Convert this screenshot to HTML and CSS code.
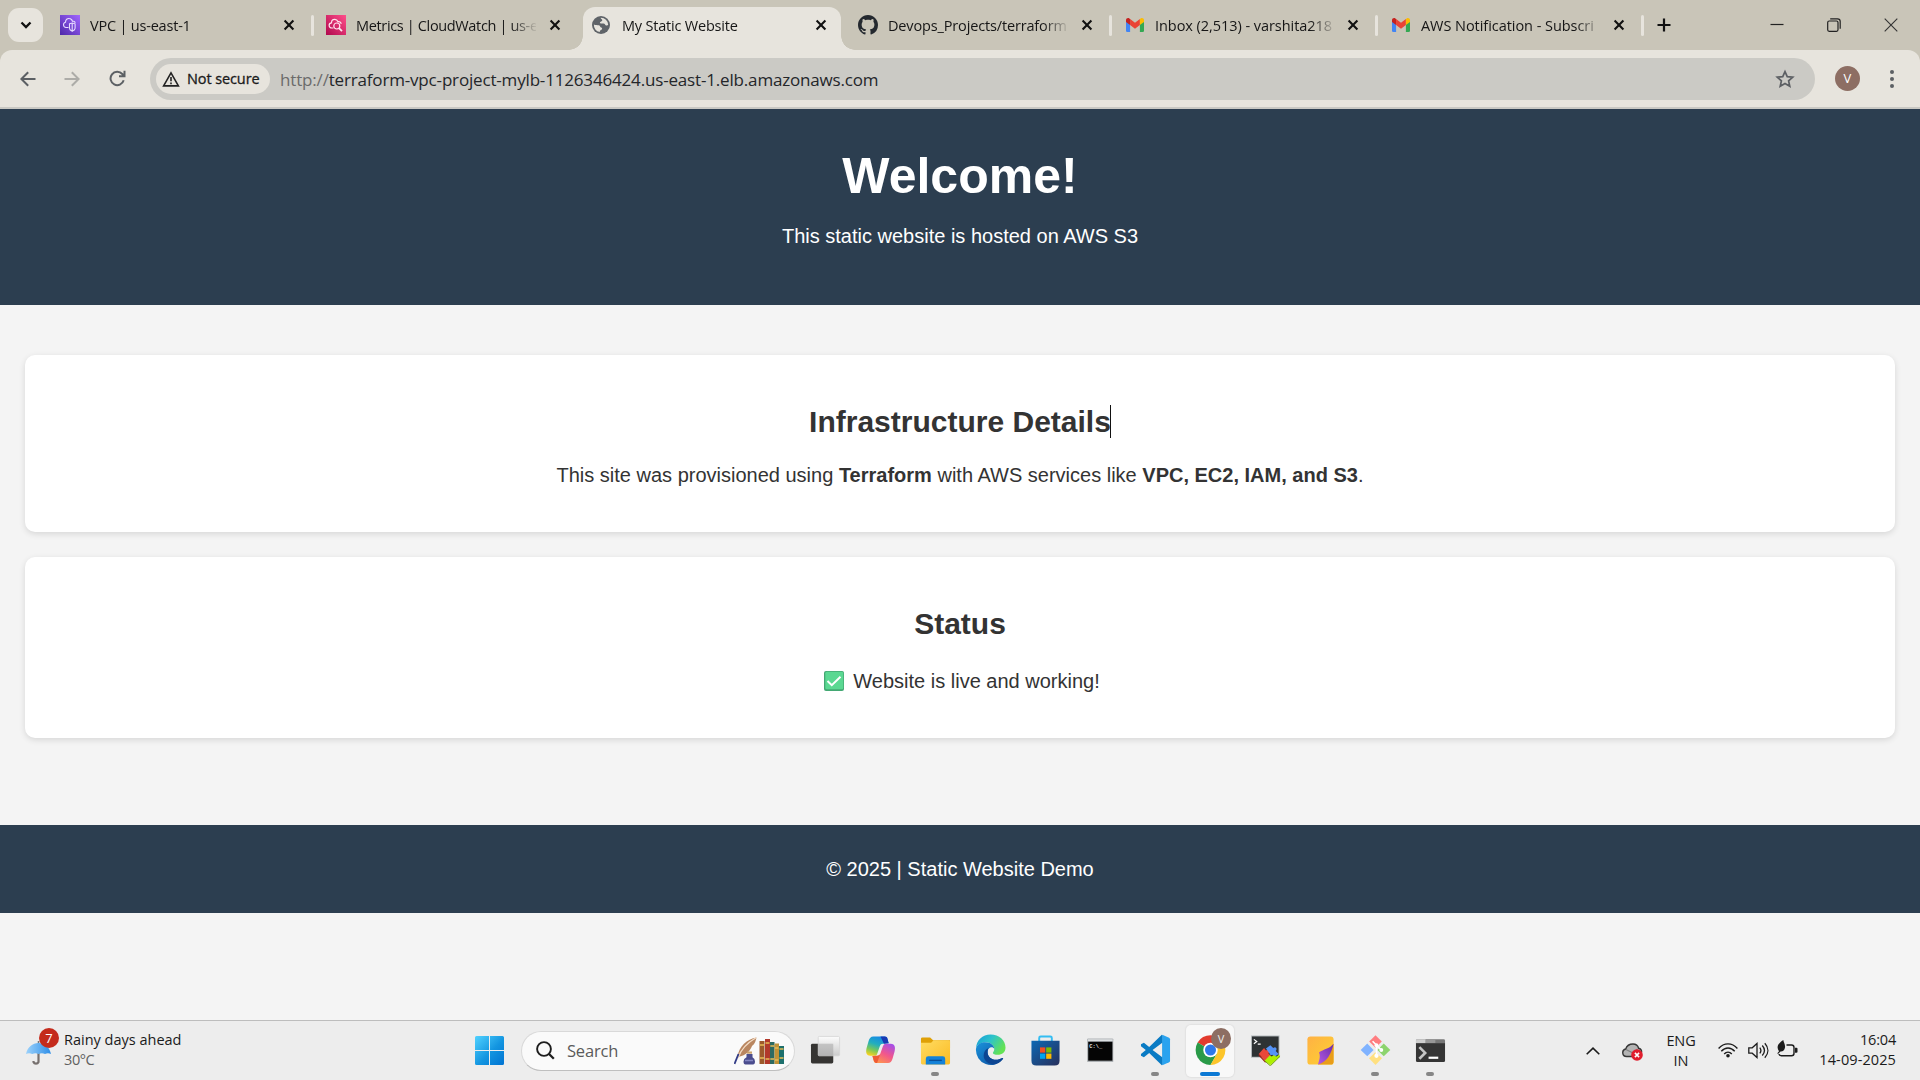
FILE: index.html
```html
<!DOCTYPE html>
<html lang="en">
<head>
<meta charset="utf-8">
<title>My Static Website</title>
<link rel="stylesheet" href="styles.css">
</head>
<body>
<svg class="defs" width="0" height="0" aria-hidden="true">
  <defs>
    <linearGradient id="gVpc" x1="0" y1="1" x2="1" y2="0"><stop offset="0" stop-color="#4d27a8"/><stop offset="1" stop-color="#a166ff"/></linearGradient>
    <linearGradient id="gCw" x1="0" y1="1" x2="1" y2="0"><stop offset="0" stop-color="#b0084d"/><stop offset="1" stop-color="#ff4f8b"/></linearGradient>
    <linearGradient id="gWin" gradientUnits="userSpaceOnUse" x1="0" y1="0" x2="29" y2="29"><stop offset="0" stop-color="#51d2ff"/><stop offset=".55" stop-color="#1395e0"/><stop offset="1" stop-color="#0073d2"/></linearGradient>
    <linearGradient id="gFolder" x1="0" y1="0" x2="1" y2="1"><stop offset="0" stop-color="#ffdc62"/><stop offset="1" stop-color="#fbbb23"/></linearGradient>
    <linearGradient id="gStore" x1="0" y1="0" x2="1" y2="1"><stop offset="0" stop-color="#0d68b4"/><stop offset="1" stop-color="#28305c"/></linearGradient>
    <linearGradient id="gEdgeTop" x1="0" y1="0" x2="1" y2=".5"><stop offset="0" stop-color="#159bd8"/><stop offset=".5" stop-color="#2dc3cb"/><stop offset="1" stop-color="#63e254"/></linearGradient>
    <linearGradient id="gEdgeLow" x1="0" y1="0" x2="1" y2="1"><stop offset="0" stop-color="#1a94dc"/><stop offset="1" stop-color="#0c4a9c"/></linearGradient>
    <linearGradient id="gCopA" x1=".6" y1="0" x2=".2" y2="1"><stop offset="0" stop-color="#1689e6"/><stop offset=".4" stop-color="#23aebe"/><stop offset=".7" stop-color="#78c85a"/><stop offset="1" stop-color="#ffd21c"/></linearGradient>
    <linearGradient id="gCopB" x1=".8" y1="0" x2=".2" y2="1"><stop offset="0" stop-color="#a54ee8"/><stop offset=".5" stop-color="#f2578b"/><stop offset="1" stop-color="#ff9a48"/></linearGradient>
    <linearGradient id="gSticky" x1="0" y1="0" x2="1" y2="1"><stop offset="0" stop-color="#ffb144"/><stop offset="1" stop-color="#fdd231"/></linearGradient>
    <linearGradient id="gCurl" x1="0" y1="1" x2="1" y2="0"><stop offset="0" stop-color="#b45ae4"/><stop offset="1" stop-color="#6a2ba8"/></linearGradient>
    <linearGradient id="gUmb" x1="0" y1="0" x2="1" y2="0"><stop offset="0" stop-color="#9cd2fb"/><stop offset="1" stop-color="#2d8ee8"/></linearGradient>
    <linearGradient id="gGlass" x1="0" y1="0" x2="0" y2="1"><stop offset="0" stop-color="#fdfdfd"/><stop offset="1" stop-color="#c9c9c9"/></linearGradient>
    <symbol id="close" viewBox="0 0 12 12"><path d="M1.6 1.6l8.8 8.8M10.4 1.6l-8.8 8.8" stroke="#111" stroke-width="2.1" fill="none"/></symbol>
    <symbol id="gmail" viewBox="0 0 18 14"><path d="M0 2v10.700Q0 14 1.300 14H4.100V6z" fill="#4285f4"/><path d="M18 2v10.700Q18 14 16.700 14H13.900V6z" fill="#34a853"/><path d="M4.100 1.100V7.100L9 10.800l4.900-3.700V1.100L9 4.800z" fill="#ea4335"/><path d="M0 2v2l4.100 3.100v-6L3.300.5C2-.5 0 .4 0 2z" fill="#c5221f"/><path d="M18 2v2l-4.100 3.100v-6l.8-.6C16-.5 18 .4 18 2z" fill="#fbbc04"/></symbol>
  </defs>
</svg>

<div class="screen">
  <div class="tabstrip">
    <button class="tab-search"><svg width="12" height="8" viewBox="0 0 12 8"><path d="M1.500 1.500L6 6l4.500-4.500" fill="none" stroke="#111" stroke-width="2.300"/></svg></button>
    <div class="tab">
      <svg class="favicon" viewBox="0 0 20 20"><path fill="url(#gVpc)" d="M0 0h20v20H0z"/><g fill="none" stroke="#e7dcff" stroke-width="1.100"><path d="M8.500 12.500H6A2.700 2.700 0 0 1 5.500 7.200C5.500 4.500 7.500 3.200 9.300 3.500c1.800.1 2.800 1.300 3.200 2.800 1.300-.3 2.500.2 2.700 1.500"/><path d="M9.500 8.800L12.200 8l2.900.8v4.500c0 1.300-1 2.200-2.900 3-1.800-.8-2.700-1.700-2.700-3zM12.200 8v8"/></g></svg>
      <span class="tab-title t-vpc">VPC | us-east-1</span><svg class="tab-close"><use href="#close"/></svg>
    </div>
    <div class="tab">
      <svg class="favicon" viewBox="0 0 20 20"><path fill="url(#gCw)" d="M0 0h20v20H0z"/><g fill="none" stroke="#ffe4ee" stroke-width="1.200"><path d="M7.500 13H6a2.600 2.600 0 0 1-.5-5.200C5.500 5.200 7 4.200 8.800 4.300c1.700.1 2.600 1 3.200 2.400 1.400-.3 3 .4 3.200 2.200"/><circle cx="10.800" cy="11" r="3"/><path d="M13 13.200l3 3" stroke-width="1.700"/></g></svg>
      <span class="tab-title t-cw">Metrics | CloudWatch | us-e</span><svg class="tab-close"><use href="#close"/></svg>
    </div>
    <div class="tab active">
      <svg class="favicon globe" viewBox="0 0 18 18"><circle cx="9" cy="9" r="9" fill="#5f6368"/><path d="M8.700 1.800c-.2 1.500 1.600 1.200 1.600 2.400 0 1.500-2.400 1-2.400 2.400 0 1.300 1.800.8 3.500.9 1.900.1 1.500 2.200 3.100 2.100.8 0 1.300-.5 1.700-.8A7.200 7.200 0 0 0 8.700 1.800zM1.900 8.500c1.400.9 3.600.5 5 .8 1.600.4 1 1.900 2.100 2.100 1.500.3 1.300 1.300.7 2-.7.900-1.900.5-2 2.700A7.200 7.200 0 0 1 1.900 8.500z" fill="#e7e4dd"/></svg>
      <span class="tab-title t-site">My Static Website</span><svg class="tab-close"><use href="#close"/></svg>
    </div>
    <div class="tab">
      <svg class="favicon" viewBox="0 0 16 16"><path fill="#24292f" d="M8 0C3.580 0 0 3.580 0 8c0 3.540 2.290 6.530 5.470 7.590.4.070.55-.17.55-.38 0-.19-.01-.82-.01-1.490-2.010.37-2.530-.49-2.690-.94-.09-.23-.48-.94-.82-1.130-.28-.15-.68-.52-.01-.53.63-.01 1.080.58 1.230.82.72 1.210 1.870.87 2.330.66.07-.52.28-.87.51-1.070-1.780-.2-3.640-.89-3.640-3.950 0-.87.31-1.590.82-2.150-.08-.2-.36-1.020.08-2.120 0 0 .67-.21 2.200.82.640-.18 1.320-.27 2-.27s1.360.09 2 .27c1.530-1.040 2.200-.82 2.200-.82.440 1.100.160 1.920.080 2.120.510.560.820 1.270.820 2.150 0 3.070-1.870 3.750-3.650 3.950.290.250.540.730.540 1.480 0 1.070-.010 1.930-.010 2.200 0 .210.150.460.550.380A8.010 8.010 0 0 0 16 8c0-4.420-3.580-8-8-8z"/></svg>
      <span class="tab-title t-gh">Devops_Projects/terraform</span><svg class="tab-close"><use href="#close"/></svg>
    </div>
    <div class="tab">
      <svg class="favicon mail"><use href="#gmail"/></svg>
      <span class="tab-title t-inbox">Inbox (2,513) - varshita218</span><svg class="tab-close"><use href="#close"/></svg>
    </div>
    <div class="tab">
      <svg class="favicon mail"><use href="#gmail"/></svg>
      <span class="tab-title t-aws">AWS Notification - Subscri</span><svg class="tab-close"><use href="#close"/></svg>
    </div>
    <svg class="new-tab" width="14" height="14" viewBox="0 0 14 14"><path d="M7 .5v13M.5 7h13" stroke="#111" stroke-width="2.200"/></svg>
    <div class="window-buttons">
      <svg width="14" height="14" viewBox="0 0 14 14"><path d="M.5 6.500h13" stroke="#222" stroke-width="1.200"/></svg>
      <svg width="14" height="14" viewBox="0 0 14 14"><g fill="none" stroke="#222" stroke-width="1.200"><rect x=".7" y="3" width="10.300" height="10.300" rx="1.500"/><path d="M3.200.8h7.300q2.700 0 2.700 2.700v7.200"/></g></svg>
      <svg width="14" height="14" viewBox="0 0 14 14"><path d="M.7.7l12.600 12.600M13.300.7L.7 13.300" stroke="#333" stroke-width="1.100"/></svg>
    </div>
  </div>

  <div class="toolbar-wrap">
  <div class="toolbar">
    <svg class="nav-icon" width="16" height="16" viewBox="0 0 16 16"><path d="M15.500 8H2M8.200 1.200L1.400 8l6.800 6.800" fill="none" stroke="#5c6064" stroke-width="2"/></svg>
    <svg class="nav-icon" width="16" height="16" viewBox="0 0 16 16"><path d="M.5 8H14M7.800 1.200L14.600 8l-6.800 6.800" fill="none" stroke="#adaca8" stroke-width="2"/></svg>
    <svg class="nav-icon reload" width="17" height="17" viewBox="0 0 17 17"><path d="M14.700 10.300A6.700 6.700 0 1 1 13.300 4l1.600 1.700M15.500 .8v5.500H10" fill="none" stroke="#5c6064" stroke-width="2"/></svg>
    <div class="omnibox">
      <div class="chip"><svg width="18" height="16" viewBox="0 0 18 16"><path d="M9 1.900L16.400 14.900H1.600z" fill="none" stroke="#222" stroke-width="1.600"/><path d="M9 6v4.300M9 11.500v1.800" stroke="#222" stroke-width="1.600"/></svg><span>Not secure</span></div>
      <div class="url"><span class="scheme">http://</span>terraform-vpc-project-mylb-1126346424.us-east-1.elb.amazonaws.com</div>
      <svg class="star" width="20" height="20" viewBox="0 0 20 20"><path d="M10 2.600l2.250 5.050 5.500.55-4.150 3.700 1.200 5.400L10 14.500l-4.800 2.800 1.200-5.400-4.150-3.700 5.500-.55z" fill="none" stroke="#5c5f63" stroke-width="1.700"/></svg>
    </div>
    <span class="avatar">V</span>
    <svg class="kebab" width="4" height="18" viewBox="0 0 4 18"><g fill="#5c6064"><circle cx="2" cy="2" r="2"/><circle cx="2" cy="9" r="2"/><circle cx="2" cy="16" r="2"/></g></svg>
  </div>
  </div>

  <main class="site">
    <header class="site-header">
      <h1>Welcome!</h1>
      <p>This static website is hosted on AWS S3</p>
    </header>
    <div class="sections">
      <section class="card">
        <h2>Infrastructure Details<i class="caret"></i></h2>
        <p>This site was provisioned using <b>Terraform</b> with AWS services like <b>VPC, EC2, IAM, and S3</b>.</p>
      </section>
      <section class="card status">
        <h2>Status</h2>
        <p><svg class="check" width="20" height="20" viewBox="0 0 20 20"><rect width="20" height="20" rx="2" fill="#43a873"/><rect x="1.300" y=".8" width="18" height="17.400" rx="1.500" fill="#5bd892"/><path d="M3.500 10l4.300 4.200 8.700-8.400" fill="none" stroke="#fff" stroke-width="2"/></svg><span>Website is live and working!</span></p>
      </section>
    </div>
    <footer class="site-footer">© 2025 | Static Website Demo</footer>
  </main>

  <div class="taskbar">
    <div class="weather">
      <div class="weather-icon">
        <svg width="25" height="25" viewBox="0 0 25 25"><path d="M12.500 10v11a2.700 2.700 0 0 1-5 0v-1" fill="none" stroke="#77716f" stroke-width="2.200"/><path d="M12.500 0v3" stroke="#777" stroke-width="1.500"/><path d="M0 13C1.500 6 6.500 2 12.500 2S23.500 6 25 13q-3-1.700-6 0-3-1.700-6.500 0-3-1.700-6.300 0Q3 11.500 0 13z" fill="url(#gUmb)"/></svg>
        <span class="badge">7</span>
      </div>
      <div class="weather-text"><span class="w1">Rainy days ahead</span><span class="w2">30°C</span></div>
    </div>
    <svg class="start" width="29" height="29" viewBox="0 0 29 29"><path fill="url(#gWin)" d="M1.500 0H14v14H0V1.500Q0 0 1.500 0zM15 0h12.500Q29 0 29 1.500V14H15zM0 15h14v14H1.500Q0 29 0 27.500zM15 15h14v12.500q0 1.500-1.500 1.500H15z"/></svg>
    <div class="search">
      <svg width="19" height="19" viewBox="0 0 19 19"><circle cx="8" cy="8" r="6.900" fill="none" stroke="#1d1d1d" stroke-width="1.900"/><path d="M12.800 12.800l5 5" stroke="#1d1d1d" stroke-width="2.300"/></svg>
      <span class="search-label">Search</span>
      <svg class="quill" width="50" height="28" viewBox="0 0 50 28">
        <path d="M22.500.5C13 2 5 9 3.500 20 13 19 17 12 18 9c3-2 4-6 4.500-8.500z" fill="#b98660"/><path d="M22 .8C13 6 7 12 4 21" fill="none" stroke="#f3dcc5" stroke-width="1.300"/><path d="M4.500 17L.5 27" stroke="#303a86" stroke-width="1.800"/>
        <path d="M13 14.500h5v2.200h-5z" fill="#c9a06c"/><path d="M12.500 17h6v3.200q2.500 1.500 2.500 4.300 0 3-2 3h-7.500q-2 0-2-3 0-2.800 3-4.300z" fill="#4b4d8e"/><path d="M11 23.500h8" stroke="#8588c4" stroke-width="1.500"/>
        <path d="M25.500 4h5v23h-5z" fill="#9d5a2c"/><path d="M31 2h5v25h-5z" fill="#b2392b"/><path d="M36 5h4.500v22H36z" fill="#2c6a62"/><path d="M40.500 6.500H45V27h-4.500z" fill="#c09236"/><path d="M45 9h5v18h-5z" fill="#1d706d"/>
        <path d="M26 8h4m-4 13h4m1.500-15h4m-4 16h4m.8-13h3.700m-3.700 13h3.700m1-11h3.500m-3.500 12h3.500m1-11h4m-4 9h4" stroke="#e7bd56" stroke-width="1.400"/>
      </svg>
    </div>
    <div class="apps">
      <div class="app"><svg viewBox="0 0 32 32"><rect x="1" y="9.500" width="23" height="20.500" rx="1.500" fill="#353432"/><rect x="8.500" y="2" width="22" height="20" rx="1" fill="url(#gGlass)" fill-opacity=".93" stroke="#d4d4d4" stroke-width=".8"/><path d="M9 9.500h15V22H9z" fill="#a6a6a6" opacity=".45"/></svg></div>
      <div class="app"><svg viewBox="0 0 32 32"><path d="M8.500 2h12c3 0 2.700 3 4 7l-6 .5c-2 0-2.800 1.400-3.300 3l-2.500 7c-.7 2-1.400 2.500-3.400 2.500H5.700C.5 22 .8 17 1.800 13.500l2-7C4.700 3.700 6 2 8.500 2z" fill="url(#gCopA)"/><path d="M16 2h4.500c3 0 2.700 3 4 7l-5 .5z" fill="#1739b3"/><path d="M23.700 29.500h-12c-3 0-2.800-3-4-7.300l5.200-.3c2 0 2.800-1.600 3.300-3.200l2.300-6.500c.7-2 1.500-2.700 3.500-2.700h4.400c5.200 0 5 5 4 8.500l-2 7c-.8 2.800-2.200 4.500-4.700 4.500z" fill="url(#gCopB)"/><path d="M7.700 22.200l5.200-.3c1.800 0 2.600-1.200 3.100-2.600L12.500 29.500c-3.300 0-3.500-3-4.800-7.300z" fill="#ef5b35"/></svg></div>
      <div class="app running"><svg viewBox="0 0 32 32"><path d="M1 4.500Q1 3 2.500 3h8l3 3H31v8H1z" fill="#dfa007"/><path d="M1 8.500h10.500L14 6h15.500Q31 6 31 7.500v22q0 1.500-1.500 1.500h-27Q1 31 1 29.500z" fill="url(#gFolder)"/><path d="M6 31v-6q0-2.500 2.500-2.500h15q2.500 0 2.500 2.500v6z" fill="#1482d8"/><path d="M9.500 26.700h13" stroke="#084f99" stroke-width="1.400"/></svg></div>
      <div class="app"><svg viewBox="0 0 32 32"><path d="M1 15C1 6 8 0 16 0c9 0 15.500 6 15.500 13.500 0 5-3.700 7.500-8 7.500-3 0-5-.9-5-2 0-.8 1.400-1.400 1.400-4C19.900 11 16 8 10.500 8 5 8 1 12 1 15z" fill="url(#gEdgeTop)"/><path d="M1 15C1.500 10.500 5.500 8 10.500 8c5.500 0 9.400 3 9.400 7-1-3-6.900-2.500-6.900 3 0 6 6 9.500 12 7.500 1.500-.4 2.600-1 3.300-1.200 1 0 .8.600.5 1.100A15.500 15.500 0 0 1 1 15z" fill="url(#gEdgeLow)"/><path d="M13 18c0 6 6 9.500 12 7.500 1.500-.4 2.600-1 3.300-1.200 1 0 .8.600.5 1.100-5 7.500-16 7-19.300-.5C8 21 9.500 15.500 14 14c-.7 1.200-1 2.500-1 4z" fill="#0c4592"/></svg></div>
      <div class="app"><svg viewBox="0 0 32 32"><path d="M9.500 7V3.500Q9.500 2 11 2h10q1.500 0 1.500 1.500V7" fill="none" stroke="#35bdf2" stroke-width="2"/><path d="M1.500 6.500h29V27q0 5-5 5h-19q-5 0-5-5z" fill="url(#gStore)"/><path d="M10.300 13.300h5.400v5.400h-5.400z" fill="#f25022"/><path d="M16.700 13.300h5.400v5.400h-5.400z" fill="#7fba00"/><path d="M10.300 19.700h5.400v5.400h-5.400z" fill="#00a4ef"/><path d="M16.700 19.700h5.400v5.400h-5.400z" fill="#ffb900"/></svg></div>
      <div class="app"><svg viewBox="0 0 32 32"><rect x="2.200" y="4" width="27" height="24.500" rx="1" fill="#aeb2b5"/><path d="M3 5h25.500v1.700H3z" fill="#dde0e2"/><path d="M3.300 7.500h25V27h-25z" fill="#050505"/><text x="4.500" y="13.500" class="tiny">C:\_</text></svg></div>
      <div class="app running"><svg viewBox="0 0 32 32"><path d="M22.500.3L9.500 13 4 8.500 1 10v2l5 4-5 4v2l3 1.500 5.500-4.500 13 12.700 1-.7V1zM23 8.500v15L13 16z" fill="#0a7bc4" fill-rule="evenodd"/><path d="M23 .3l7 3q1 .5 1 1.700v22q0 1.200-1 1.700l-7 3z" fill="#2aa3ef"/></svg></div>
      <div class="app chrome"><svg viewBox="0 0 32 32"><path d="M16 16L2.700 8.300A15.400 15.400 0 0 1 29.300 8.300z" fill="#e33b2e"/><path d="M16 16L2.700 8.300A15.400 15.400 0 0 0 16 31.400L22.700 20z" fill="#299a48"/><path d="M16 16L29.300 8.300A15.400 15.400 0 0 1 16 31.400L22.700 19.500z" fill="#fcc52b"/><circle cx="16" cy="16" r="7.500" fill="#fff"/><circle cx="16" cy="16" r="5.700" fill="#2e78ea"/></svg><span class="chrome-badge">V</span></div>
      <div class="app"><svg viewBox="0 0 32 32"><path d="M1 1h29.500v23H1z" fill="#b8bdc0"/><path d="M2 2h27.500v21H2z" fill="#2e3234"/><path d="M4 5l3 2.200L4 9.500M8 10h3" fill="none" stroke="#fff" stroke-width="1.200"/><path d="M9 20l5.500-6 2 2.500q2-1.500 3 0t-.5 3l2.500 2.500-5.500 5.500z" fill="#e8473a"/><path d="M9 20l7 7.500v2L9 22z" fill="#9c1c14"/><path d="M16.500 14.500l4.500-3.500 3 3q2-1.500 3 0t-.5 3l3 3-4 3-2.500-2q-2.500 1-2.800-1.500z" fill="#5593f7"/><path d="M15 27l5.500-5.500q1.500 2 3 .5t3.500 1l3-2 1 1.500-10 9z" fill="#aef000"/><path d="M15 27l6 5.300 10-9.800" fill="none" stroke="#6e9e00" stroke-width="1"/></svg></div>
      <div class="app"><svg viewBox="0 0 32 32"><rect x="2.500" y="2" width="27" height="29" rx="3" fill="url(#gSticky)"/><path d="M29.500 9.500L13.500 31H26.500q3 0 3-3z" fill="#e99d19"/><path d="M29.500 9.500C25 15 19 15 14.500 18.500c2 5-.5 9-1 12.500C23 28 27 20 29.500 9.500z" fill="url(#gCurl)"/></svg></div>
      <div class="app running"><svg viewBox="0 0 32 32"><path d="M16 .7l6.500 6.500L16 13.700 9.500 7.200z" fill="#ff7d80"/><path d="M24.500 9.200l6.800 6.800-6.800 6.500L18 16z" fill="#8dd46d"/><path d="M7.500 9.200L14 16l-6.500 6.500L.7 16z" fill="#80b3ff"/><path d="M16 18l6.700 6.500-6.700 7-6.700-7z" fill="#ffe080"/><path d="M13 7l9 9M17 10v12" stroke="#fff" stroke-width="1.700"/><circle cx="17" cy="11" r="2" fill="#fff"/><circle cx="22" cy="16" r="2" fill="#fff"/><circle cx="17" cy="22" r="2.200" fill="#fff"/></svg></div>
      <div class="app running"><svg viewBox="0 0 32 32"><path d="M1 6.500Q1 5 2.500 5h27Q31 5 31 6.500V10H1z" fill="#777"/><path d="M1 6.500Q1 5 2.500 5H11v4H1z" fill="#cfcfcf"/><path d="M11 5h10v4H11z" fill="#989898"/><path d="M1 9h30v18q0 1.500-1.500 1.500h-27Q1 28.500 1 27z" fill="#353535"/><path d="M4.500 13l6 6-6 6" fill="none" stroke="#c6c6c6" stroke-width="2.700"/><path d="M14 24h10" stroke="#fff" stroke-width="2.300"/></svg></div>
    </div>
    <div class="tray">
      <svg class="chevron" width="14" height="8" viewBox="0 0 14 8"><path d="M.7 7.300L7 1.200l6.300 6.100" fill="none" stroke="#1c1c1c" stroke-width="1.600"/></svg>
      <svg class="cloud" width="21" height="18" viewBox="0 0 21 18"><path d="M4.500 13.500A3.800 3.800 0 0 1 3.700 6C5 2.200 8 1 11 1c3.200 0 5 2 5.600 4.300 2 .5 3 2 3 3.500l-7 4.700z" fill="#b4b4b4" stroke="#373737" stroke-width="1.400"/><path d="M4 6.500L11 10l4.500-4" fill="none" stroke="#808080" stroke-width="1.300"/><circle cx="15" cy="12" r="5.800" fill="#e01e2d"/><path d="M12.900 9.900l4.200 4.200m0-4.200l-4.200 4.200" stroke="#fff" stroke-width="1.500"/></svg>
      <div class="lang"><span>ENG</span><span>IN</span></div>
      <svg class="wifi" width="20" height="15" viewBox="0 0 20 15"><g fill="none" stroke="#1c1c1c" stroke-width="1.400"><path d="M.6 5.500C6-.7 14-.7 19.400 5.500M3.300 8.300c4-4.500 9.400-4.500 13.400 0M6.200 11c2.300-2.500 5.300-2.500 7.600 0"/></g><circle cx="10" cy="12.800" r="1.800" fill="#1c1c1c"/></svg>
      <svg class="sound" width="21" height="17" viewBox="0 0 21 17"><g fill="none" stroke="#1c1c1c" stroke-width="1.300"><path d="M.8 5.800h3.400L9 1.500v14l-4.800-4.300H.8zM11.800 5.600c1.300 1.700 1.300 4.100 0 5.800M14.300 3.500c2.600 3 2.600 7 0 10M16.800 1.300c4.100 4.500 4.100 10 0 14.400"/></g></svg>
      <svg class="battery" width="21" height="18" viewBox="0 0 21 18"><path d="M9.500 5h5Q17 5 17 7.500v5.700q0 2.500-2.500 2.500H4.300Q2.300 15.700 2 14" fill="none" stroke="#1c1c1c" stroke-width="1.400"/><path d="M18 7.800h1.500q1 0 1 1v3q0 1-1 1H18z" fill="#1c1c1c"/><path d="M6.300 0C6.500 2 8.500 4.500 8 7.500c-.4 2.800-2.200 4.200-4.500 4L1 14l-.7-.8 1.700-2C-1 7 1 3.500 6.300 0z" fill="#1c1c1c"/></svg>
      <div class="clock"><span class="time">16:04</span><span class="date">14-09-2025</span></div>
    </div>
  </div>
</div>
</body>
</html>
```
FILE: styles.css
```css
* { box-sizing: border-box; }
body { margin: 0; overflow: hidden; background: #f4f4f4; }
.defs { display: block; position: absolute; }
.screen { width: 1920px; height: 1080px; display: flex; flex-direction: column; font-family: "Open Sans", "Noto Sans", sans-serif; color: #1b1b1b; white-space: nowrap; }
.screen svg { display: block; flex: none; }

/* browser tabs */
.tabstrip { height: 50px; flex: none; display: flex; align-items: center; background: #c9c5b8; }
.tab-search { width: 35px; height: 34px; margin: 0 7px 0 8px; padding: 0; border: 0; border-radius: 11px; background: #e7e4dd; display: flex; align-items: center; justify-content: center; }
.tab { width: 266px; height: 50px; flex: none; display: flex; align-items: center; padding-left: 10px; position: relative; }
.tab::after { content: ""; width: 3px; height: 21px; border-radius: 2px; background: #e7e4dd; margin-left: 16px; }
.favicon { width: 20px; height: 20px; margin-right: 10px; }
.favicon.globe { width: 18px; height: 18px; margin: 0 12px 0 0; }
.favicon.mail { width: 18px; height: 14px; margin: 0 11px 0 2px; }
.favicon.mail + .tab-title { width: 179px; }
.tab-title { width: 180px; overflow: hidden; font-size: 14.5px; line-height: 22px; color: #161616; padding-top: 1px; letter-spacing: -.35px; -webkit-mask-image: linear-gradient(90deg, #000 155px, transparent 182px); mask-image: linear-gradient(90deg, #000 155px, transparent 182px); }
.t-vpc, .t-site { letter-spacing: -.2px; }
.t-gh { letter-spacing: -.15px; }
.t-inbox, .t-aws { letter-spacing: -.05px; }
.tab-close { width: 12px; height: 12px; margin-left: 12.500px; }
.tab.active { height: 43px; align-self: flex-end; padding: 0 0 7px 9px; margin: 0 7px 0 1px; width: 258px; border-radius: 12px 12px 0 0; background: #e7e4dd; }
.tab.active::after { display: none; }
.tab.active::before { content: ""; position: absolute; left: -14px; right: -14px; bottom: 0; height: 14px; background: radial-gradient(circle at 0 0, transparent 13.500px, #e7e4dd 14px) 0 0 / 14px 14px no-repeat, radial-gradient(circle at 100% 0, transparent 13.500px, #e7e4dd 14px) 100% 0 / 14px 14px no-repeat; }
.tab:has(+ .active)::after { visibility: hidden; }
.new-tab { margin-left: 11px; }
.window-buttons { margin: 0 22px 0 auto; display: flex; gap: 43px; }

/* address bar */
.toolbar-wrap { flex: none; background: #c9c5b8; }
.toolbar { height: 59px; display: flex; align-items: flex-start; padding: 8px 0 0 20px; border-radius: 12px 12px 0 0; border-bottom: 2px solid #c9c8c3; background: #e7e4dd; }
.nav-icon { margin: 13px 28px 0 0; }
.nav-icon.reload { margin: 12px 24px 0 1px; }
.omnibox { width: 1665px; height: 42px; border-radius: 21px; background: #cbcac5; display: flex; align-items: center; padding: 0 20px 0 6px; }
.chip { width: 114px; height: 30px; border-radius: 15px; background: #e7e4dd; display: flex; align-items: center; padding-left: 6px; gap: 7px; font-size: 14.5px; font-weight: 500; }
.chip span { -webkit-text-stroke: .3px #1b1b1b; letter-spacing: -.1px; padding-bottom: 2px; }
.url { margin: 0 auto 0 10px; font-size: 17px; letter-spacing: -.17px; color: #24262a; }
.scheme { color: #6b6b6b; }
.avatar { width: 25px; height: 25px; margin: 8px 0 0 20px; border-radius: 50%; background: #8d6e63; color: #fff; font-size: 13px; line-height: 25px; text-align: center; }
.kebab { margin: 12px 0 0 30px; }

/* hosted page */
.site { flex: 1; font-family: "Liberation Sans", Arial, sans-serif; font-size: 20px; line-height: 23px; color: #333; text-align: center; }
.site h1, .site h2, .site p { margin: 0; }
.site-header { height: 196px; padding-top: 38px; background: #2c3e50; color: #fff; }
.site h1 { font-size: 50px; line-height: 58px; }
.site-header p { margin-top: 20px; }
.sections { height: 520px; padding: 50px 25px 0; display: flex; flex-direction: column; gap: 25px; }
.card { height: 177px; padding-top: 49px; border-radius: 10px; background: #fff; box-shadow: 0 2px 6px rgba(0, 0, 0, .12); }
.card.status { height: 181px; }
.card h2 { font-size: 30px; line-height: 35px; }
.card p { margin-top: 25px; }
.card.status p { margin-top: 29px; display: flex; justify-content: center; align-items: center; gap: 9px; padding-left: 4px; }
.card.status .check { margin-top: -2px; }
.caret { display: inline-block; width: 1px; height: 33px; margin: 0 0 0 -1px; vertical-align: -6px; background: #111; }
.site-footer { height: 88px; padding-top: 33px; background: #2c3e50; color: #fff; }

/* taskbar */
.taskbar { height: 60px; flex: none; display: flex; align-items: center; border-top: 1px solid #bdbdbd; background: #ededed; font-size: 14.5px; }
.weather { width: 475px; flex: none; display: flex; padding-left: 26px; }
.weather-icon { width: 38px; height: 40px; position: relative; padding-top: 10px; }
.badge { position: absolute; left: 13px; top: -3px; width: 20px; height: 20px; border-radius: 50%; background: #c42b1c; color: #fff; font-size: 13px; line-height: 20px; text-align: center; }
.weather-text { display: flex; flex-direction: column; line-height: 20px; margin-top: -1px; }
.w1 { letter-spacing: 0; }
.w2 { color: #606060; letter-spacing: -.4px; }
.search { width: 274px; height: 40px; flex: none; margin-left: 17px; padding: 0 10px 0 14px; border: 1px solid #d9d9d9; border-bottom-color: #bfbfbf; border-radius: 20px; background: #fafafa; display: flex; align-items: center; }
.search-label { margin: 0 auto 0 12px; font-size: 16.500px; letter-spacing: -.2px; color: #5b5b5b; }
.apps { margin-left: 6px; display: flex; gap: 7px; }
.app { width: 48px; height: 52px; display: flex; justify-content: center; padding-top: 9px; border-radius: 5px; position: relative; }
.app svg { width: 31px; height: 32px; }
.app.running::after, .app.chrome::after { content: ""; position: absolute; bottom: 1px; left: 20px; width: 8px; height: 4px; border-radius: 2px; background: #868686; }
.app.chrome { background: #f8f8f8; box-shadow: 0 0 1px 1px #e2e2e2; }
.app.chrome::after { left: 14px; width: 20px; background: #0b78d4; }
.chrome-badge { position: absolute; left: 25px; top: 3px; width: 20px; height: 21px; border-radius: 50%; background: #8d6e63; color: #eee; font-size: 11px; line-height: 21px; text-align: center; }
.tiny { font: bold 5.500px "Liberation Mono", monospace; fill: #e0e0e0; }
.tray { flex: 1; display: flex; align-items: center; padding-right: 24px; }
.chevron { margin-left: 132px; }
.cloud { margin: 2px 0 0 22px; }
.lang { width: 40px; margin-left: 18px; display: flex; flex-direction: column; align-items: center; line-height: 20px; letter-spacing: -.1px; }
.wifi { margin-left: 17px; }
.sound { margin-left: 10px; }
.battery { margin: -3px 0 0 8px; }
.clock { margin: -2px 0 0 auto; display: flex; flex-direction: column; align-items: flex-end; line-height: 20px; letter-spacing: .1px; }
.time { letter-spacing: -.2px; }
```
